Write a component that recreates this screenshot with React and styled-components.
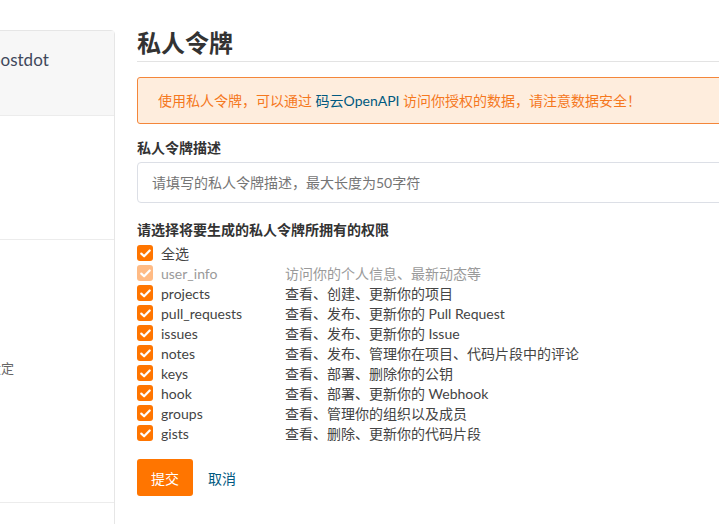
import React, { useState } from 'react'
import styled, { createGlobalStyle } from 'styled-components'

const GlobalStyle = createGlobalStyle`
  html, body {
    margin: 0;
    padding: 0;
    background: #fff;
    overflow: hidden;
  }
  body {
    font-family: Lato, "Noto Sans CJK SC", sans-serif;
    color: #333;
  }
`

//#region styles
const Page = styled.div`
  display: flex;
  align-items: flex-start;
  width: 1000px;
  height: 524px;
`

const SidebarClip = styled.div`
  width: 116px;
  flex-shrink: 0;
  overflow: hidden;
  padding-top: 30px;
  height: 494px;
`

const SideCard = styled.div`
  margin-left: -80px;
  width: 195px;
  height: 560px;
  border: 1px solid #e6e6e6;
  border-radius: 4px;
  box-sizing: border-box;
`

const SideSection = styled.div`
  height: ${(p) => p.h}px;
  background: ${(p) => (p.gray ? '#f7f7f7' : '#fff')};
  border-bottom: 1px solid #ececec;
  box-sizing: border-box;
`

const SideName = styled.div`
  padding: 17px 0 0 70px;
  font-size: 17px;
  line-height: 24px;
  color: #40485b;
`

const SideItem = styled.div`
  padding: 118px 0 0 41px;
  font-size: 13px;
  line-height: 20px;
  color: #666;
`

const Main = styled.div`
  margin-left: 21px;
  width: 640px;
  flex-shrink: 0;
`

const Title = styled.h1`
  margin: 27px 0 0;
  padding-bottom: 2px;
  font-size: 24px;
  line-height: 32px;
  font-weight: bold;
  color: #333;
  border-bottom: 1px solid #e3e3e3;
`

const Alert = styled.div`
  margin-top: 15px;
  padding: 12px 20px;
  font-size: 14px;
  line-height: 21px;
  color: #f5781e;
  background: #feeddd;
  border: 1px solid #f4863a;
  border-radius: 3px;

  a {
    color: #005980;
    text-decoration: none;
  }
`

const Label = styled.div`
  font-size: 14px;
  font-weight: bold;
  line-height: 20px;
  color: #333;
  margin-top: ${(p) => p.top}px;
`

const Input = styled.input`
  display: block;
  box-sizing: border-box;
  width: 100%;
  height: 41px;
  margin-top: 4px;
  padding: 0 14px;
  border: 1px solid #dcdfe6;
  border-radius: 4px;
  font-family: inherit;
  font-size: 14px;
  color: #333;
  outline: none;

  ::placeholder {
    color: #bdbdbd;
  }
`

const ScopeList = styled.div`
  margin-top: 3px;
  display: flex;
  flex-direction: column;
`

const ScopeRow = styled.label`
  display: flex;
  align-items: center;
  height: 20px;
  font-size: 14px;
  color: ${(p) => (p.disabled ? '#9a9a9a' : '#444')};
  cursor: ${(p) => (p.disabled ? 'default' : 'pointer')};
`

const Box = styled.span`
  width: 16px;
  height: 16px;
  border-radius: 3px;
  background: ${(p) => (p.disabled ? '#ffbb85' : p.checked ? '#ff7500' : '#fff')};
  border: ${(p) => (p.checked ? 'none' : '1px solid #ccc')};
  box-sizing: border-box;
  display: flex;
  align-items: center;
  justify-content: center;
  flex-shrink: 0;
`

const ScopeName = styled.span`
  margin-left: 8px;
  width: 124px;
`

const ScopeDesc = styled.span``

const Actions = styled.div`
  display: flex;
  align-items: center;
  margin-top: 16px;
`

const Submit = styled.button`
  width: 56px;
  height: 37px;
  border: none;
  border-radius: 3px;
  background: #ff7500;
  color: #fff;
  font-family: inherit;
  font-size: 14px;
  cursor: pointer;
`

const Cancel = styled.a`
  margin-left: 15px;
  font-size: 14px;
  color: #005980;
  text-decoration: none;
  cursor: pointer;
`
//#endregion

const scopes = [
  { name: 'user_info', desc: '访问你的个人信息、最新动态等', disabled: true },
  { name: 'projects', desc: '查看、创建、更新你的项目' },
  { name: 'pull_requests', desc: '查看、发布、更新你的 Pull Request' },
  { name: 'issues', desc: '查看、发布、更新你的 Issue' },
  { name: 'notes', desc: '查看、发布、管理你在项目、代码片段中的评论' },
  { name: 'keys', desc: '查看、部署、删除你的公钥' },
  { name: 'hook', desc: '查看、部署、更新你的 Webhook' },
  { name: 'groups', desc: '查看、管理你的组织以及成员' },
  { name: 'gists', desc: '查看、删除、更新你的代码片段' },
]

function Check({ checked, disabled }) {
  return (
    <Box checked={checked} disabled={disabled}>
      {checked && (
        <svg width="11" height="9" viewBox="0 0 11 9">
          <path d="M1.3 4.6 L4.1 7.3 L9.7 1.5" fill="none" stroke="#fff" strokeWidth="2.2" strokeLinecap="round" strokeLinejoin="round" />
        </svg>
      )}
    </Box>
  )
}

export default function App() {
  const [checked, setChecked] = useState(() => scopes.map(() => true))
  const all = checked.every(Boolean)

  function toggle(i) {
    if (scopes[i].disabled) return
    setChecked(checked.map((c, j) => (j === i ? !c : c)))
  }

  function toggleAll() {
    setChecked(scopes.map((s) => (s.disabled ? true : !all)))
  }

  return (
    <>
      <GlobalStyle />
      <Page>
        <SidebarClip>
          <SideCard>
            <SideSection gray h={85}>
              <SideName>postdot</SideName>
            </SideSection>
            <SideSection h={124} />
            <SideSection h={263}>
              <SideItem>个人设定</SideItem>
            </SideSection>
          </SideCard>
        </SidebarClip>
        <Main>
          <Title>私人令牌</Title>
          <Alert>
            使用私人令牌，可以通过 <a>码云OpenAPI</a> 访问你授权的数据，请注意数据安全！
          </Alert>
          <Label top={14}>私人令牌描述</Label>
          <Input placeholder="请填写的私人令牌描述，最大长度为50字符" />
          <Label top={17}>请选择将要生成的私人令牌所拥有的权限</Label>
          <ScopeList>
            <ScopeRow onClick={toggleAll}>
              <Check checked={all} />
              <ScopeName>全选</ScopeName>
            </ScopeRow>
            {scopes.map((s, i) => (
              <ScopeRow key={s.name} disabled={s.disabled} onClick={() => toggle(i)}>
                <Check checked={checked[i]} disabled={s.disabled} />
                <ScopeName>{s.name}</ScopeName>
                <ScopeDesc>{s.desc}</ScopeDesc>
              </ScopeRow>
            ))}
          </ScopeList>
          <Actions>
            <Submit>提交</Submit>
            <Cancel>取消</Cancel>
          </Actions>
        </Main>
      </Page>
    </>
  )
}
